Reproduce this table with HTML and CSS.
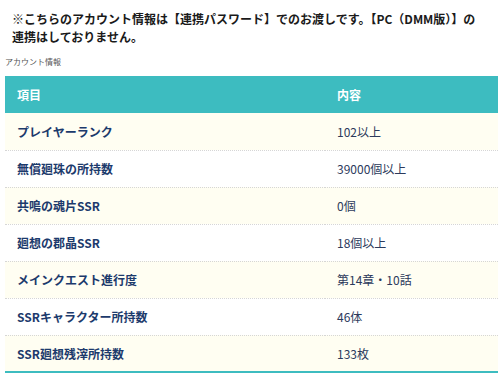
FILE: index.html
```html
<!DOCTYPE html>
<html lang="ja">
<head>
<meta charset="utf-8">
<link rel="stylesheet" href="styles.css">
</head>
<body>
<div class="page">
  <p class="notice">※こちらのアカウント情報は【連携パスワード】でのお渡しです。【PC（DMM版）】の<br>連携はしておりません。</p>
  <p class="caption">アカウント情報</p>
  <table class="info">
    <thead>
      <tr><th class="col-key">項目</th><th class="col-val">内容</th></tr>
    </thead>
    <tbody>
      <tr><td class="key">プレイヤーランク</td><td class="val">102以上</td></tr>
      <tr><td class="key">無償廻珠の所持数</td><td class="val">39000個以上</td></tr>
      <tr><td class="key">共鳴の魂片SSR</td><td class="val">0個</td></tr>
      <tr><td class="key">廻想の郡晶SSR</td><td class="val">18個以上</td></tr>
      <tr><td class="key">メインクエスト進行度</td><td class="val">第14章・10話</td></tr>
      <tr><td class="key">SSRキャラクター所持数</td><td class="val">46体</td></tr>
      <tr><td class="key">SSR廻想残滓所持数</td><td class="val">133枚</td></tr>
    </tbody>
  </table>
</div>
</body>
</html>
```

FILE: styles.css
```css
html, body {
  margin: 0;
  padding: 0;
  background: #ffffff;
}
body {
  font-family: "Noto Sans CJK JP", "Noto Sans", sans-serif;
}
.page {
  padding: 0 5px;
}
.notice {
  margin: 0;
  padding: 10px 0 0 7px;
  font-size: 12px;
  line-height: 18px;
  font-weight: bold;
  color: #1a1a1a;
}
.caption {
  margin: 10px 0 0 0;
  font-size: 8px;
  line-height: 12px;
  color: #555555;
}
.info {
  margin-top: 8px;
  width: 100%;
  border-collapse: collapse;
  table-layout: fixed;
  font-size: 12px;
  border-bottom: 2px solid #3dbcc0;
}
.info th {
  background: #3dbcc0;
  color: #ffffff;
  font-weight: bold;
  text-align: left;
  height: 37px;
  padding: 0 0 0 12px;
  box-sizing: border-box;
}
.col-key {
  width: 320px;
}
.info td {
  height: 37px;
  padding: 0 0 0 12px;
  border-bottom: 1px dotted #d6d6d6;
  box-sizing: border-box;
}
.info tbody tr:nth-child(odd) td {
  background: #fffef2;
}
.info tbody tr:last-child td {
  border-bottom: none;
}
.key {
  font-weight: bold;
  color: #1c3a6c;
}
.val {
  color: #2c3a5c;
}
```
